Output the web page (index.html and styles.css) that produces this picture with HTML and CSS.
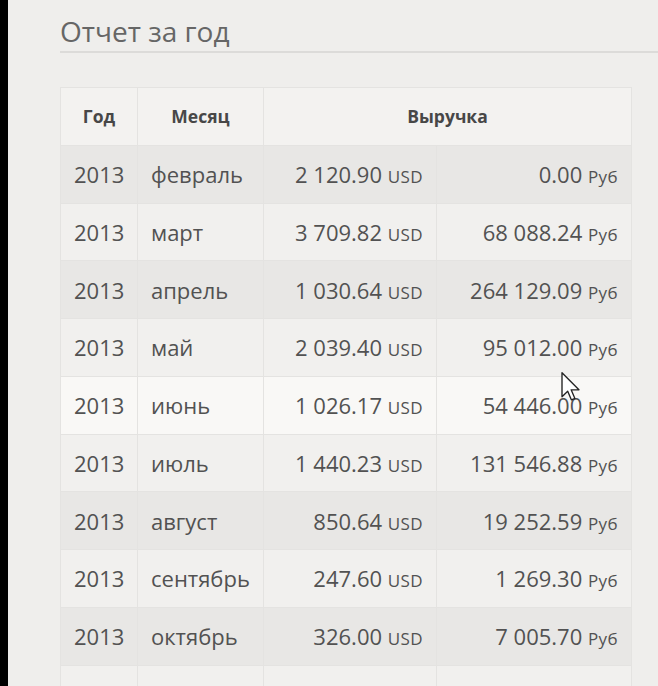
FILE: index.html
```html
<!DOCTYPE html>
<html lang="ru">
<head>
<meta charset="utf-8">
<title>Отчет за год</title>
<link rel="stylesheet" href="styles.css">
</head>
<body>
<div class="screen">
  <div class="edge"></div>
  <main class="content">
    <h1 class="title">Отчет за год</h1>
    <table class="report">
      <colgroup>
        <col class="c-year"><col class="c-month"><col class="c-usd"><col class="c-rub">
      </colgroup>
      <thead>
        <tr><th>Год</th><th>Месяц</th><th colspan="2">Выручка</th></tr>
      </thead>
      <tbody>
        <tr class="odd"><td>2013</td><td class="m">февраль</td><td class="num">2 120.90 <small>USD</small></td><td class="num">0.00 <small>Руб</small></td></tr>
        <tr><td>2013</td><td class="m">март</td><td class="num">3 709.82 <small>USD</small></td><td class="num">68 088.24 <small>Руб</small></td></tr>
        <tr class="odd"><td>2013</td><td class="m">апрель</td><td class="num">1 030.64 <small>USD</small></td><td class="num">264 129.09 <small>Руб</small></td></tr>
        <tr><td>2013</td><td class="m">май</td><td class="num">2 039.40 <small>USD</small></td><td class="num">95 012.00 <small>Руб</small></td></tr>
        <tr class="hover"><td>2013</td><td class="m">июнь</td><td class="num">1 026.17 <small>USD</small></td><td class="num cursor-cell">54 446.00 <small>Руб</small>
          <svg class="cursor" width="20" height="30" viewBox="0 0 13 20"><path d="M0.5 0.5 L0.5 16.5 L4.3 12.8 L6.8 18.6 L9.1 17.6 L6.6 11.9 L11.8 11.9 Z" fill="#fff" stroke="#222" stroke-width="0.9" stroke-linejoin="round"/></svg></td></tr>
        <tr><td>2013</td><td class="m">июль</td><td class="num">1 440.23 <small>USD</small></td><td class="num">131 546.88 <small>Руб</small></td></tr>
        <tr class="odd"><td>2013</td><td class="m">август</td><td class="num">850.64 <small>USD</small></td><td class="num">19 252.59 <small>Руб</small></td></tr>
        <tr><td>2013</td><td class="m">сентябрь</td><td class="num">247.60 <small>USD</small></td><td class="num">1 269.30 <small>Руб</small></td></tr>
        <tr class="odd"><td>2013</td><td class="m">октябрь</td><td class="num">326.00 <small>USD</small></td><td class="num">7 005.70 <small>Руб</small></td></tr>
        <tr><td>2013</td><td class="m">ноябрь</td><td class="num">301.14 <small>USD</small></td><td class="num">14 243.00 <small>Руб</small></td></tr>
      </tbody>
    </table>
  </main>
</div>
</body>
</html>
```
FILE: styles.css
```css
html, body {
  margin: 0;
  padding: 0;
  height: 100%;
  overflow: hidden;
}
body {
  background: #efeeec;
  font-family: "Open Sans", "Noto Sans", sans-serif;
  color: #505050;
}
.screen {
  display: flex;
  height: 686px;
}
.edge {
  width: 8px;
  flex: none;
  background: #000;
}
.content {
  flex: 1;
  padding-left: 52px;
  padding-top: 12px;
}
.title {
  margin: 0;
  font-size: 28px;
  font-weight: 400;
  line-height: 38px;
  color: #666;
  padding-bottom: 1px;
  border-bottom: 2px solid #dcdbd9;
}
.report {
  margin-top: 34px;
  border-collapse: collapse;
  width: 571px;
  table-layout: fixed;
}
.c-year { width: 77px; }
.c-month { width: 126px; }
.c-usd { width: 173px; }
.c-rub { width: 195px; }
.report th,
.report td {
  border: 1px solid #e4e3e1;
  padding: 0 13px;
  height: 57.75px;
  box-sizing: border-box;
}
.report th {
  background: #f3f2f0;
  font-size: 17.5px;
  font-weight: 700;
  color: #474747;
  text-align: center;
}
.report td {
  font-size: 22px;
  background: #f1f0ee;
  color: #525252;
  white-space: nowrap;
}
.report tr.odd td {
  background: #e8e7e5;
}
.report tr.hover td {
  background: #f9f8f6;
}
.report td.num {
  text-align: right;
}
.report td small {
  font-size: 17px;
  letter-spacing: 0.4px;
  color: #525252;
}
.cursor-cell {
  position: relative;
}
.cursor {
  position: absolute;
  left: 124px;
  top: -5px;
}
```
